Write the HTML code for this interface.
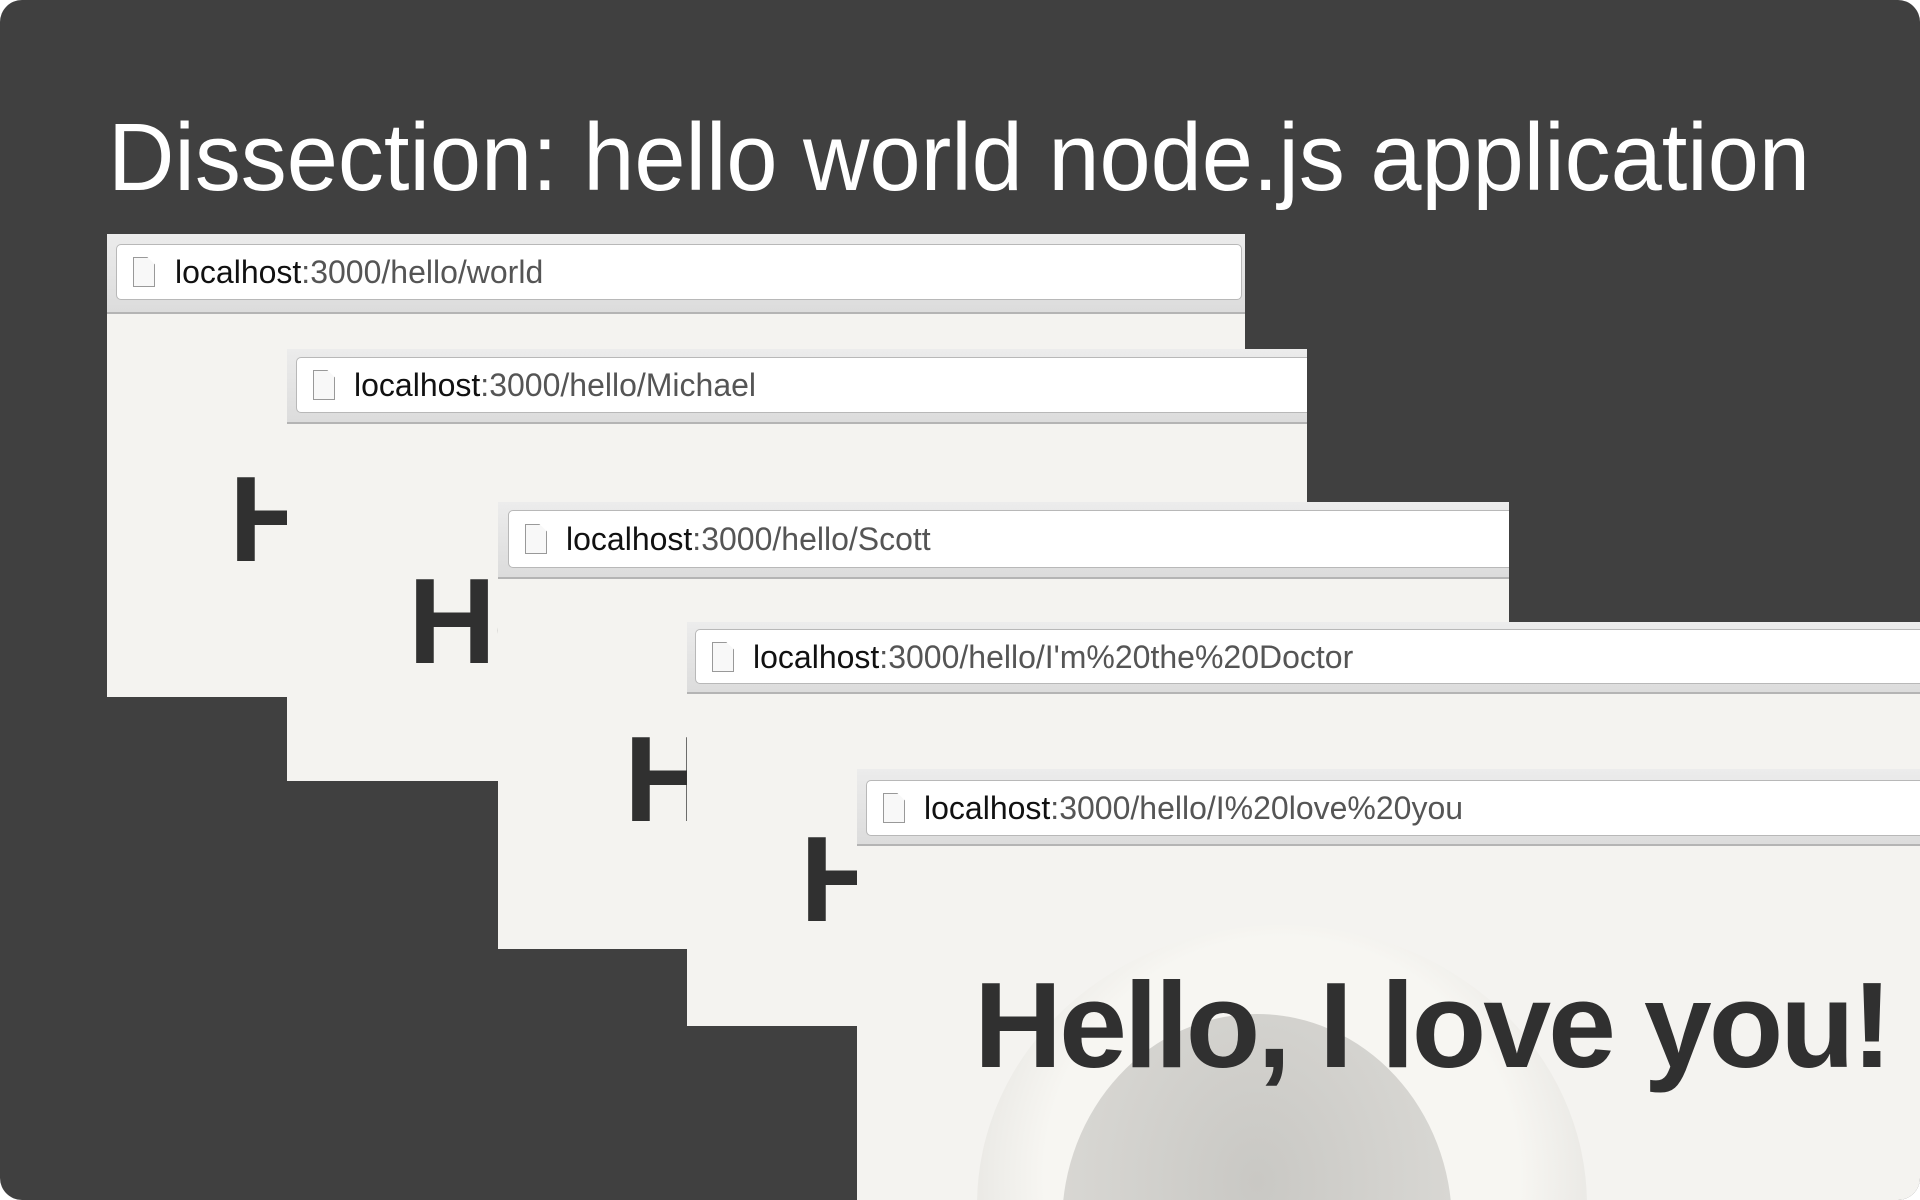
<!DOCTYPE html>
<html><head><meta charset="utf-8"><style>
html,body{margin:0;padding:0;background:#fff;overflow:hidden;width:1920px;height:1200px;}
#s{position:relative;width:1920px;height:1200px;background:#404040;border-radius:22px;overflow:hidden;font-family:"Liberation Sans",sans-serif;}
.w{position:absolute;background:#f4f3f0;overflow:hidden;}
.tb{position:absolute;left:0;top:0;right:0;background:linear-gradient(#ececec,#dcdcdc);border-bottom:2px solid #b4b4b4;box-sizing:border-box;}
.url{position:absolute;background:#fff;border:1px solid #b8b8b8;border-radius:5px;box-sizing:border-box;right:-10px;}
.url span.t{position:absolute;font-size:32px;color:#555;white-space:nowrap;letter-spacing:0px;}
.url span.t b{font-weight:normal;color:#111;}
.ic{position:absolute;width:22px;height:30px;background:#f8f8f8;border:1px solid #999;box-sizing:border-box;clip-path:polygon(0 0,65% 0,100% 25%,100% 100%,0 100%);}
.h{position:absolute;font-size:122px;font-weight:bold;color:#303030;white-space:nowrap;letter-spacing:-3px;}
</style></head><body><div id="s">
<svg style="position:absolute;left:0;top:0" width="1920" height="230"><text x="108" y="190" font-family="Liberation Sans, sans-serif" font-size="96" fill="#fff" textLength="1702" lengthAdjust="spacingAndGlyphs">Dissection: hello world node.js application</text></svg>

<div class="w" style="left:107px;top:234px;width:1138px;height:463px">
 <div class="tb" style="height:80px"></div>
 <div class="url" style="left:9px;top:10px;height:56px;right:3px"><div class="ic" style="left:16px;top:12px"></div><span class="t" style="left:58px;top:9px"><b>localhost</b>:3000/hello/world</span></div>
 <div class="h" style="left:122px;top:215px">Hello, world!</div>
</div>

<div class="w" style="left:287px;top:349px;width:1020px;height:432px">
 <div class="tb" style="height:75px"></div>
 <div class="url" style="left:9px;top:8px;height:56px;right:-10px"><div class="ic" style="left:16px;top:12px"></div><span class="t" style="left:57px;top:9px"><b>localhost</b>:3000/hello/Michael</span></div>
 <div class="h" style="left:121px;top:202px">Hello, Michael!</div>
</div>

<div class="w" style="left:498px;top:502px;width:1011px;height:447px">
 <div class="tb" style="height:77px"></div>
 <div class="url" style="left:10px;top:8px;height:58px;right:-10px"><div class="ic" style="left:16px;top:13px"></div><span class="t" style="left:57px;top:10px"><b>localhost</b>:3000/hello/Scott</span></div>
 <div class="h" style="left:126px;top:207px">Hello, Scott!</div>
</div>

<div class="w" style="left:687px;top:622px;width:1233px;height:404px">
 <div class="tb" style="height:72px"></div>
 <div class="url" style="left:8px;top:7px;height:55px"><div class="ic" style="left:16px;top:12px"></div><span class="t" style="left:57px;top:9px"><b>localhost</b>:3000/hello/I'm%20the%20Doctor</span></div>
 <div class="h" style="left:113px;top:187px">Hello, I'm the Doctor!</div>
</div>

<div class="w" style="left:857px;top:769px;width:1063px;height:431px">
 <div style="position:absolute;left:120px;top:156px;width:610px;height:560px;border-radius:50%;background:radial-gradient(ellipse at 50% 45%,#f7f6f2 55%,#ebeae6 70%,#f4f3f0 80%)"></div>
 <div style="position:absolute;left:205px;top:245px;width:390px;height:420px;border-radius:50%;background:radial-gradient(ellipse at 50% 40%,#c9c8c4,#d8d7d3 70%,#e4e3df)"></div>
 <div class="tb" style="height:77px"></div>
 <div class="url" style="left:9px;top:11px;height:56px"><div class="ic" style="left:16px;top:12px"></div><span class="t" style="left:57px;top:9px"><b>localhost</b>:3000/hello/I%20love%20you</span></div>
 <div class="h" style="left:117px;top:186px">Hello, I love you!</div>
</div>
</div></body></html>
